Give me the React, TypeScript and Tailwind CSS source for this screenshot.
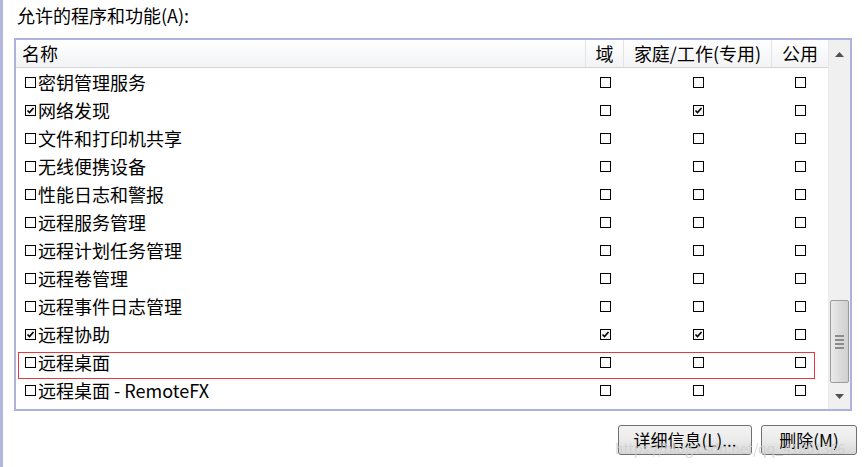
import React from "react";

type Row = { name: string; domain: boolean; home: boolean; pub: boolean; on: boolean };

const rows: Row[] = [
  { name: "密钥管理服务", on: false, domain: false, home: false, pub: false },
  { name: "网络发现", on: true, domain: false, home: true, pub: false },
  { name: "文件和打印机共享", on: false, domain: false, home: false, pub: false },
  { name: "无线便携设备", on: false, domain: false, home: false, pub: false },
  { name: "性能日志和警报", on: false, domain: false, home: false, pub: false },
  { name: "远程服务管理", on: false, domain: false, home: false, pub: false },
  { name: "远程计划任务管理", on: false, domain: false, home: false, pub: false },
  { name: "远程卷管理", on: false, domain: false, home: false, pub: false },
  { name: "远程事件日志管理", on: false, domain: false, home: false, pub: false },
  { name: "远程协助", on: true, domain: true, home: true, pub: false },
  { name: "远程桌面", on: false, domain: false, home: false, pub: false },
  { name: "远程桌面 - RemoteFX", on: false, domain: false, home: false, pub: false },
];

function Box({ checked }: { checked: boolean }) {
  return (
    <svg width="11" height="11" viewBox="0 0 11 11" className="shrink-0">
      <rect x="0.5" y="0.5" width="10" height="10" fill={checked ? "#f4f4f4" : "#fff"} stroke="#000" />
      {checked && <path d="M2.5 5.5 L4.5 7.5 L8.5 3" fill="none" stroke="#000" strokeWidth="1.6" />}
    </svg>
  );
}

export default function App() {
  return (
    <div
      className="relative w-[866px] h-[467px] overflow-hidden bg-white border-l-[3px] border-[#b3b7dd] text-[18px] text-black"
      style={{ fontFamily: '"Noto Sans CJK SC", "Noto Sans", sans-serif' }}
    >
      <div className="h-[38px] pl-[14px] pt-[3px] leading-[24px]">允许的程序和功能(A):</div>

      <div className="ml-[11px] w-[838px] h-[373px] border-2 border-[#adb2dc] flex overflow-hidden">
        <div className="w-[812px] flex flex-col">
          <div className="h-[28px] shrink-0 flex bg-gradient-to-b from-white to-[#f2f3f5] border-b border-[#d5d5d5] leading-[26px]">
            <div className="w-[570px] pl-[6px] border-r border-[#e3e4e6]">名称</div>
            <div className="w-[38px] text-center border-r border-[#e3e4e6]">域</div>
            <div className="w-[148px] text-center border-r border-[#e3e4e6]">家庭/工作(专用)</div>
            <div className="w-[56px] text-center">公用</div>
          </div>
          {rows.map((r) => (
            <div key={r.name} className="h-[28px] shrink-0 flex items-center leading-[26px]">
              <div className="w-[570px] pl-[9px] flex items-center gap-[2px]">
                <Box checked={r.on} />
                <span>{r.name}</span>
              </div>
              <div className="w-[38px] flex justify-center">
                <Box checked={r.domain} />
              </div>
              <div className="w-[148px] flex justify-center">
                <Box checked={r.home} />
              </div>
              <div className="w-[56px] flex justify-center">
                <Box checked={r.pub} />
              </div>
            </div>
          ))}
        </div>

        <div className="w-[22px] flex flex-col bg-[#f0f0f0] border-l border-[#e8e8e8]">
          <div className="h-[27px] flex items-center justify-center pt-[2px]">
            <svg width="9" height="5" viewBox="0 0 9 5">
              <path d="M0 5 L4.5 0 L9 5 Z" fill="#505050" />
            </svg>
          </div>
          <div className="flex-1" />
          <div className="h-[83px] mx-[1px] rounded-[2px] border border-[#9b9b9b] bg-gradient-to-r from-[#eaeaea] via-[#dcdcdc] to-[#d0d0d0] flex flex-col items-center justify-center gap-[2px]">
            <div className="w-[9px] h-[2px] bg-[#8c8c8c]" />
            <div className="w-[9px] h-[2px] bg-[#8c8c8c]" />
            <div className="w-[9px] h-[2px] bg-[#8c8c8c]" />
            <div className="w-[9px] h-[2px] bg-[#8c8c8c]" />
          </div>
          <div className="h-[26px] flex items-center justify-center">
            <svg width="9" height="5" viewBox="0 0 9 5">
              <path d="M0 0 L9 0 L4.5 5 Z" fill="#505050" />
            </svg>
          </div>
        </div>
      </div>

      <div className="flex justify-end gap-[9px] pr-[9px] mt-[14px] text-[17px]">
        <button className="w-[134px] h-[30px] rounded-[3px] border border-[#707070] bg-gradient-to-b from-[#f3f3f3] via-[#ebebeb] to-[#d8d8d8] leading-[26px]">
          详细信息(L)...
        </button>
        <button className="w-[96px] h-[30px] rounded-[3px] border border-[#707070] bg-gradient-to-b from-[#f3f3f3] via-[#ebebeb] to-[#d8d8d8] leading-[26px]">
          删除(M)
        </button>
      </div>

      <div className="absolute left-[612px] top-[440px] text-[14px] leading-[16px] text-[#cfcfcf] opacity-80 whitespace-nowrap">
        https://blog.csdn.net/qq_41801366
      </div>
      <div className="absolute left-[15px] top-[352px] w-[797px] h-[27px] border border-[#e8383d]" />
    </div>
  );
}
